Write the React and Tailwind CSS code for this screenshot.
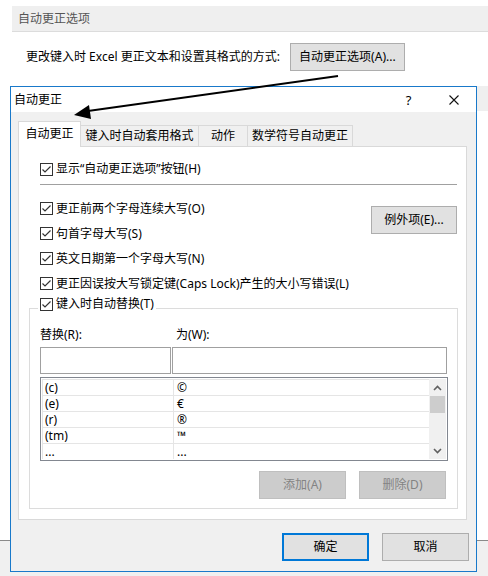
import React from "react";

const Check = () => (
  <svg width="13" height="13" viewBox="0 0 13 13" className="shrink-0">
    <rect x="0.5" y="0.5" width="12" height="12" fill="white" stroke="#333333" />
    <path d="M2.5 6.5 L5 9 L10.5 3.5" stroke="#333333" strokeWidth="1.2" fill="none" />
  </svg>
);

const CheckRow = ({ label, className = "" }) => (
  <div className={`flex items-center gap-[3px] ${className}`}>
    <Check />
    <span>{label}</span>
  </div>
);

const Btn = ({ children, className = "" }) => (
  <div className={`flex items-center justify-center h-[28px] border border-[#adadad] bg-[#e1e1e1] ${className}`}>
    {children}
  </div>
);

const DisabledBtn = ({ children }) => (
  <div className="flex items-center justify-center w-[87px] h-[28px] border border-[#bfbfbf] bg-[#cccccc] text-[#838383]">
    {children}
  </div>
);

const Chevron = ({ down }) => (
  <svg width="9" height="6" viewBox="0 0 9 6">
    <path
      d={down ? "M1 1 L4.5 4.5 L8 1" : "M1 5 L4.5 1.5 L8 5"}
      stroke="#606060"
      strokeWidth="1.6"
      fill="none"
    />
  </svg>
);

const rows = [
  ["(c)", "©"],
  ["(e)", "€"],
  ["(r)", "®"],
  ["(tm)", "™"],
  ["...", "..."],
];

const tabs = [
  { label: "键入时自动套用格式", w: "w-[118px]" },
  { label: "动作", w: "w-[49px]" },
  { label: "数学符号自动更正", w: "w-[105px]" },
];

export default function App() {
  return (
    <div className="relative w-[488px] h-[576px] overflow-hidden bg-white text-black text-[12px] leading-[16px] [font-family:'Noto_Sans','Noto_Sans_CJK_SC',sans-serif] flex flex-col">
      {/* page behind the dialog */}
      <div className="h-[6px]" />
      <div className="ml-[12px] h-[26px] bg-[#efefef] border-b border-[#dcdcdc] pl-[6px] flex items-center text-[#555555]">
        自动更正选项
      </div>
      <div className="mt-[11px] pl-[26px] flex items-center gap-[10px]">
        <span>更改键入时 Excel 更正文本和设置其格式的方式:</span>
        <Btn className="w-[115px]">自动更正选项(A)...</Btn>
      </div>
      <div className="mt-[15px] ml-[12px] h-[25px] bg-[#efefef]" />
      <div className="flex-1" />
      <div className="h-[36px] border-t border-[#8a8a8a] bg-[#f0f0f0]" />

      {/* dialog */}
      <div className="absolute left-[10px] top-[86px] w-[467px] h-[486px] border border-[#1979ca] bg-[#f0f0f0] flex flex-col">
        <div className="h-[25px] bg-white flex items-center pl-[3px]">
          <span>自动更正</span>
          <div className="ml-auto flex h-full">
            <div className="w-[45px] flex items-center justify-center text-[13px]">?</div>
            <div className="w-[45px] flex items-center justify-center">
              <svg width="10" height="10" viewBox="0 0 10 10">
                <path d="M0.5 0.5 L9.5 9.5 M9.5 0.5 L0.5 9.5" stroke="#111" strokeWidth="1.1" />
              </svg>
            </div>
          </div>
        </div>

        <div className="pt-[9px] pl-[7px] flex flex-col">
          {/* tabs */}
          <div className="flex items-end h-[25px]">
            <div className="relative z-10 w-[63px] h-[26px] -mb-[1px] bg-white border border-b-0 border-[#d9d9d9] flex items-center justify-center pb-[2px]">
              自动更正
            </div>
            {tabs.map((t) => (
              <div
                key={t.label}
                className={`${t.w} h-[21px] border border-l-0 border-b-0 border-[#d9d9d9] bg-[#f0f0f0] flex items-center justify-center`}
              >
                {t.label}
              </div>
            ))}
          </div>

          {/* panel */}
          <div className="w-[449px] h-[374px] bg-white border border-[#d9d9d9] flex flex-col">
            <CheckRow label="显示“自动更正选项”按钮(H)" className="mt-[14px] ml-[21px] h-[16px]" />
            <div className="mt-[7px] ml-[21px] w-[417px] h-[1px] bg-[#a0a0a0]" />

            <div className="mt-[11px] ml-[21px] w-[417px] flex justify-between items-start">
              <div className="flex flex-col">
                <CheckRow label="更正前两个字母连续大写(O)" className="h-[25px]" />
                <CheckRow label="句首字母大写(S)" className="h-[25px]" />
                <CheckRow label="英文日期第一个字母大写(N)" className="h-[25px]" />
                <CheckRow label="更正因误按大写锁定键(Caps Lock)产生的大小写错误(L)" className="h-[25px] whitespace-nowrap" />
              </div>
              <Btn className="mt-[10px] w-[86px]">例外项(E)...</Btn>
            </div>

            <fieldset className="ml-[10px] w-[429px] border border-[#dcdcdc] p-0 pb-[9px] m-0 min-w-0">
              <legend className="ml-[8px] px-[2px] pb-[8px]">
                <CheckRow label="键入时自动替换(T)" className="h-[16px]" />
              </legend>
              <div className="px-[10px] flex flex-col">
                <div className="mt-[7px] flex h-[16px] items-center">
                  <span className="w-[136px]">替换(R):</span>
                  <span>为(W):</span>
                </div>
                <div className="mt-[4px] flex gap-[1px]">
                  <div className="w-[131px] h-[27px] border border-[#a0a0a0] bg-white" />
                  <div className="w-[276px] h-[27px] border border-[#a0a0a0] bg-white" />
                </div>
                <div className="mt-[3px] w-[408px] h-[84px] border border-[#828790] bg-white p-[1px] flex">
                  <div className="flex-1 flex flex-col border-l border-[#e5e5e5]">
                    {rows.map(([a, b]) => (
                      <div key={a} className="flex h-[16px] border-t border-[#e5e5e5]">
                        <div className="w-[131px] pl-[2px] border-r border-[#e5e5e5] flex items-center">{a}</div>
                        <div className="flex-1 pl-[3px] flex items-center">{b}</div>
                      </div>
                    ))}
                  </div>
                  <div className="w-[17px] bg-[#f0f0f0] flex flex-col items-center">
                    <div className="h-[17px] flex items-center justify-center">
                      <Chevron />
                    </div>
                    <div className="w-[15px] h-[17px] bg-[#cdcdcd]" />
                    <div className="flex-1" />
                    <div className="h-[17px] flex items-center justify-center">
                      <Chevron down />
                    </div>
                  </div>
                </div>
                <div className="mt-[10px] flex justify-end gap-[13px] pr-[1px]">
                  <DisabledBtn>添加(A)</DisabledBtn>
                  <DisabledBtn>删除(D)</DisabledBtn>
                </div>
              </div>
            </fieldset>
          </div>
        </div>

        <div className="mt-[13px] pr-[7px] flex justify-end gap-[13px]">
          <div className="w-[87px] h-[28px] border-2 border-[#0078d7] bg-[#e1e1e1] flex items-center justify-center">
            确定
          </div>
          <Btn className="w-[87px]">取消</Btn>
        </div>
      </div>

      {/* pointer arrow */}
      <svg className="absolute left-0 top-0 pointer-events-none" width="488" height="576">
        <line x1="338" y1="76" x2="88" y2="111" stroke="#000" strokeWidth="2" />
        <polygon points="74,115 89,105 91,119" fill="#000" />
      </svg>
    </div>
  );
}
